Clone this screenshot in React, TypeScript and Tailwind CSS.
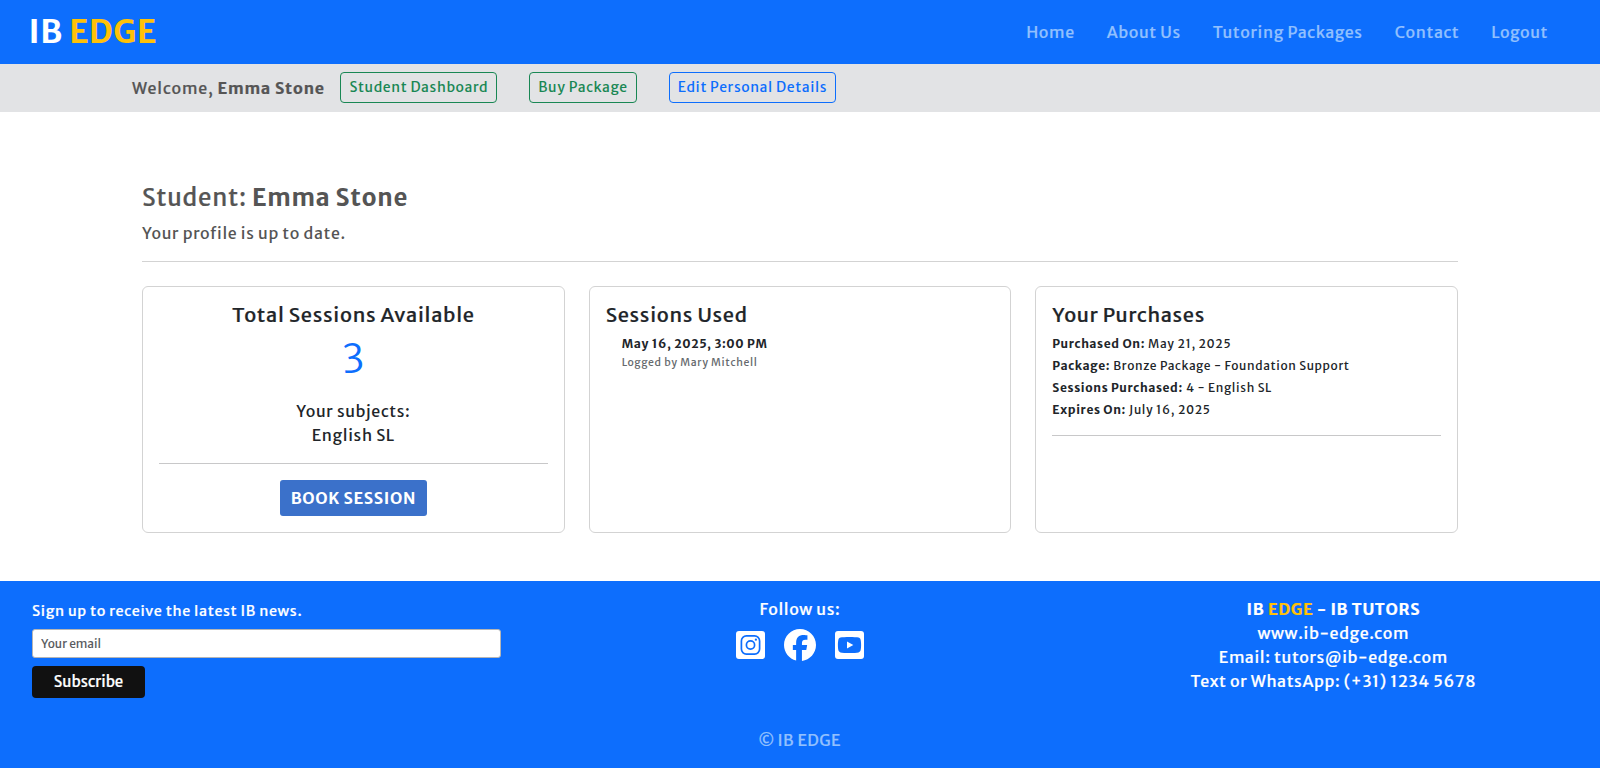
import type { ReactNode } from "react";
import { FaFacebook } from "react-icons/fa6";

const navLinks = ["Home", "About Us", "Tutoring Packages", "Contact", "Logout"];

const purchase = [
  ["Purchased On:", "May 21, 2025"],
  ["Package:", "Bronze Package - Foundation Support"],
  ["Sessions Purchased:", "4 - English SL"],
  ["Expires On:", "July 16, 2025"],
];

// Medium weight, between the family's regular and bold cuts.
const medium = "[-webkit-text-stroke:0.2px_currentColor]";

function Card({ title, center, children }: { title: string; center?: boolean; children: ReactNode }) {
  return (
    <section className={`rounded-md border border-[#d3d3d3] p-4 ${center ? "text-center" : ""}`}>
      <h2 className={`mb-2 text-[20px] leading-6 tracking-[0.71px] ${medium}`}>{title}</h2>
      {children}
    </section>
  );
}

function InstagramIcon() {
  return (
    <svg viewBox="0 0 29 28" className="h-7 w-[29px]">
      <rect width="29" height="28" rx="3" fill="#fff" />
      <g fill="none" stroke="#0d6efd">
        <rect x="5.4" y="4.9" width="18.2" height="18.2" rx="5" strokeWidth="1.7" />
        <circle cx="14.5" cy="14" r="4.1" strokeWidth="1.7" />
      </g>
      <circle cx="19.9" cy="8.7" r="1.15" fill="#0d6efd" />
    </svg>
  );
}

function YoutubeIcon() {
  return (
    <svg viewBox="0 0 29 28" className="h-7 w-[29px]">
      <rect width="29" height="28" rx="3" fill="#fff" />
      <path
        d="M14.5 6c3.6 0 7.6.2 9 .6 1.100.3 1.800 1 2.100 2.100.3 1.300.5 3.300.5 5.300s-.2 4-.5 5.300c-.3 1.100-1 1.800-2.100 2.100-1.400.4-5.400.6-9 .6s-7.600-.2-9-.6c-1.100-.3-1.800-1-2.100-2.100C3.100 18 2.900 16 2.900 14s.2-4 .5-5.300c.3-1.100 1-1.800 2.100-2.100 1.400-.4 5.400-.6 9-.6z"
        fill="#0d6efd"
      />
      <path d="M12 10.400v7.200l6.300-3.600z" fill="#fff" />
    </svg>
  );
}

function Header() {
  return (
    <header className="flex h-16 items-center justify-between bg-[#0d6efd] pl-[28.5px] pr-[52px]">
      <a className="text-[32px] leading-[48px] font-bold tracking-[0.55px] text-white">
        IB <span className="text-[#ffc107]">EDGE</span>
      </a>
      <nav className="flex gap-8 text-[#92c0fe]">
        {navLinks.map((label) => (
          <a key={label} className={medium}>
            {label}
          </a>
        ))}
      </nav>
    </header>
  );
}

function AccountBar() {
  const button = "h-[31px] rounded border px-2 py-1 text-[14px] leading-[21px]";
  return (
    <div className="flex h-12 items-start bg-[#e2e3e5] pt-2 pl-[132px] text-[#555]">
      <p className={`mt-1 mr-[15.4px] tracking-[0.84px] ${medium}`}>
        Welcome, <strong className="font-bold">Emma Stone</strong>
      </p>
      <div className="flex gap-8">
        <a className={`${button} border-[#198754] text-[#198754]`}>Student Dashboard</a>
        <a className={`${button} border-[#198754] text-[#198754]`}>Buy Package</a>
        <a className={`${button} border-[#0d6efd] text-[#0d6efd]`}>Edit Personal Details</a>
      </div>
    </div>
  );
}

function Footer() {
  return (
    <footer className="h-[187px] bg-[#0d6efd] pt-4 text-white">
      <div className="grid h-[131px] grid-cols-3">
        <form className="px-8 pt-1">
          <label className={`block text-[14.4px] leading-[21.6px] ${medium}`}>
            Sign up to receive the latest IB news.
          </label>
          <input
            placeholder="Your email"
            className="mt-[6.4px] block h-[29px] w-full rounded-[3px] border border-[#b5b5b5] bg-white px-2 text-[12px] tracking-normal placeholder:text-[#595c5f]"
          />
          <button
            type="button"
            className={`mt-2 block h-8 w-[113px] rounded bg-[#111] text-[15px] tracking-normal ${medium}`}
          >
            Subscribe
          </button>
        </form>
        <div className="text-center">
          <p className={medium}>Follow us:</p>
          <div className="mt-2 flex items-center justify-center gap-[19px]">
            <InstagramIcon />
            <FaFacebook className="size-8" />
            <YoutubeIcon />
          </div>
        </div>
        <address className={`text-center not-italic ${medium}`}>
          <p className="font-bold">
            IB <span className="text-[#ffc107]">EDGE</span> - IB TUTORS
          </p>
          <p>www.ib-edge.com</p>
          <p>Email: tutors@ib-edge.com</p>
          <p>Text or WhatsApp: (+31) 1234 5678</p>
        </address>
      </div>
      <p className={`pr-px text-center tracking-[0.45px] text-[#92c0fe] ${medium}`}>
        <span className="-mr-px align-[-1px] leading-none">©</span> IB EDGE
      </p>
    </footer>
  );
}

export default function App() {
  return (
    <div className="min-h-[768px] bg-white font-['Merriweather_Sans','Open_Sans',sans-serif] text-[16px] leading-6 font-medium tracking-[0.64px] text-[#212529]">
      <Header />
      <AccountBar />
      <main className="h-[469px] px-[142px] pt-[71px]">
        <div className="h-[79px] border-b border-[#d3d3d3] text-[#555]">
          <h1 className={`mb-[9px] text-[24px] leading-[29px] tracking-[0.76px] ${medium}`}>
            Student: <strong className="font-bold [-webkit-text-stroke:0]">Emma Stone</strong>
          </h1>
          <p>Your profile is up to date.</p>
        </div>
        <div className="mt-6 grid h-[247px] grid-cols-3 gap-6">
          <Card title="Total Sessions Available" center>
            <p className="mb-4 text-[40px] leading-[48px] font-light text-[#0d6efd]">3</p>
            <p>Your subjects:</p>
            <p>English SL</p>
            <hr className="my-4 border-[#c8c8c9]" />
            <button className="h-9 w-[147px] rounded-[3px] bg-[#3b71ca] font-bold text-white">BOOK SESSION</button>
          </Card>
          <Card title="Sessions Used">
            <div className="pl-4 leading-[18px]">
              <p className="text-[12px] font-bold">May 16, 2025, 3:00 PM</p>
              <p className="pt-px text-[10.5px] text-[#65696d]">Logged by Mary Mitchell</p>
            </div>
          </Card>
          <Card title="Your Purchases">
            <dl className="flex flex-col gap-1 border-b border-[#c8c8c9] pb-4 text-[12px] leading-[18px]">
              {purchase.map(([label, value]) => (
                <div key={label} className="flex gap-[3px]">
                  <dt className="font-bold">{label}</dt>
                  <dd>{value}</dd>
                </div>
              ))}
            </dl>
          </Card>
        </div>
      </main>
      <Footer />
    </div>
  );
}
